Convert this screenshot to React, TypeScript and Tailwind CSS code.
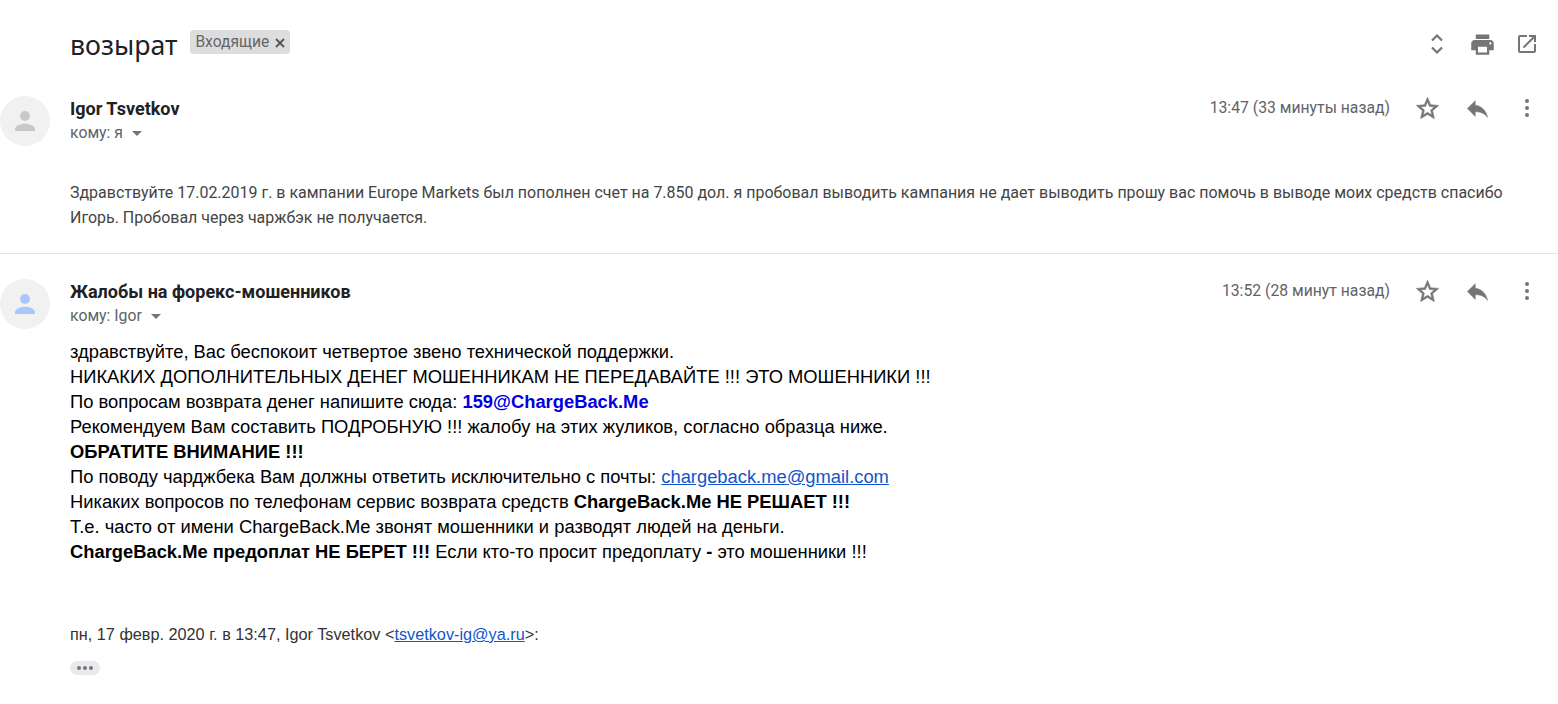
import React from "react";

const Star = () => (
  <svg viewBox="0 0 24 24" className="w-[27px] h-[27px]" fill="#757575" stroke="#757575" strokeWidth="0.5">
    <path d="M22 9.24l-7.19-.62L12 2 9.19 8.63 2 9.24l5.46 4.73L5.82 21 12 17.27 18.18 21l-1.63-7.03L22 9.24zM12 15.4l-3.76 2.27 1-4.28-3.32-2.88 4.38-.38L12 6.1l1.71 4.04 4.38.38-3.32 2.88 1 4.28L12 15.4z" />
  </svg>
);
const Reply = () => (
  <svg viewBox="0 0 24 24" className="w-[27px] h-[27px]" fill="#757575" stroke="#757575" strokeWidth="0.4">
    <path d="M10 9V5l-7 7 7 7v-4.1c5 0 8.5 1.6 11 5.1-1-5-4-10-11-11z" />
  </svg>
);
const Dots = () => (
  <svg viewBox="0 0 24 24" className="w-[24px] h-[24px]" fill="#757575">
    <circle cx="12" cy="5" r="2" />
    <circle cx="12" cy="12" r="2" />
    <circle cx="12" cy="19" r="2" />
  </svg>
);
const Person = ({ color }: { color: string }) => (
  <svg viewBox="0 0 24 24" className="w-[30px] h-[30px]" fill={color}>
    <circle cx="12" cy="8" r="4" />
    <path d="M4 20v-1.6C4 15.6 9.3 14.2 12 14.2s8 1.4 8 4.2V20H4z" />
  </svg>
);

function MessageHead({
  name,
  to,
  time,
  personColor,
}: {
  name: string;
  to: string;
  time: string;
  personColor: string;
}) {
  return (
    <div className="flex items-start">
      <div className="w-[50px] h-[50px] rounded-full bg-[#f1f1f1] flex items-center justify-center shrink-0">
        <Person color={personColor} />
      </div>
      <div className="ml-5 flex-1 pt-[1px]">
        <div className="font-['Roboto',sans-serif] font-bold text-[18px] leading-[24px] text-[#202124]">{name}</div>
        <div className="flex items-center font-['Roboto',sans-serif] text-[15.8px] leading-[20px] text-[#5f6368] mt-[2px]">
          {to}
          <span className="ml-[9px] w-0 h-0 border-x-[5px] border-x-transparent border-t-[5px] border-t-[#757575]" />
        </div>
      </div>
      <div className="flex items-center h-[24px] shrink-0">
        <span className="font-['Roboto',sans-serif] text-[15.75px] text-[#5f6368] mr-[24px]">{time}</span>
        <Star />
        <span className="ml-[23px]"><Reply /></span>
        <span className="ml-[24px]"><Dots /></span>
      </div>
    </div>
  );
}

export default function App() {
  return (
    <div className="w-[1558px] h-[704px] bg-white overflow-hidden font-['Liberation_Sans',sans-serif] text-[#222]">
      <div className="flex items-center h-[88px] pl-[70px] pr-[19px]">
        <span className="font-['Noto_Sans',sans-serif] text-[26.7px] leading-[32px] text-[#202124] translate-y-[1px]">возырат</span>
        <span className="ml-[13px] flex items-center h-[24px] rounded-[4px] bg-[#dddddd] px-[5px] pt-[1px] font-['Roboto',sans-serif] text-[15.6px] text-[#666] -translate-y-[2px]">
          Входящие
          <svg viewBox="0 0 10 10" className="ml-[6px] w-[10px] h-[10px]" stroke="#555" strokeWidth="1.8"><path d="M1 1l8 8M9 1l-8 8" /></svg>
        </span>
        <div className="ml-auto flex items-center">
          <svg viewBox="0 0 24 24" className="w-[24px] h-[24px]" fill="none" stroke="#757575" strokeWidth="2.2"><path d="M7 8.5l5-5 5 5M7 15.5l5 5 5-5" /></svg>
          <svg viewBox="0 0 24 24" className="ml-[20px] w-[27px] h-[27px]" fill="#757575"><path d="M19 8H5c-1.66 0-3 1.34-3 3v6h4v4h12v-4h4v-6c0-1.66-1.34-3-3-3zm-3 11H8v-5h8v5zm3-7c-.55 0-1-.45-1-1s.45-1 1-1 1 .45 1 1-.45 1-1 1zm-1-9H6v4h12V3z" /></svg>
          <svg viewBox="0 0 24 24" className="ml-[19px] w-[24px] h-[24px]" fill="#757575"><path d="M19 19H5V5h7V3H5c-1.11 0-2 .9-2 2v14c0 1.1.89 2 2 2h14c1.1 0 2-.9 2-2v-7h-2v7zM14 3v2h3.59l-9.83 9.83 1.41 1.41L19 6.41V10h2V3h-7z" /></svg>
        </div>
      </div>

      <div className="pr-[19px] h-[166px] border-b border-[#e5e5e5] pt-[8px]">
        <MessageHead name="Igor Tsvetkov" to="кому: я" time="13:47 (33 минуты назад)" personColor="#c8c8c8" />
        <p className="ml-[70px] mt-[34px] font-['Roboto',sans-serif] text-[15.97px] leading-[25px] text-[#444]">
          Здравствуйте 17.02.2019 г. в кампании Europe Markets был пополнен счет на 7.850 дол. я пробовал выводить кампания не дает выводить прошу вас помочь в выводе моих средств спасибо
          <br />
          Игорь. Пробовал через чаржбэк не получается.
        </p>
      </div>

      <div className="pr-[19px] pt-[25px]">
        <MessageHead name="Жалобы на форекс-мошенников" to="кому: Igor" time="13:52 (28 минут назад)" personColor="#a8c7fa" />
        <div className="ml-[70px] mt-[10px] text-[18.35px] leading-[25px] text-black">
          <div>здравствуйте, Вас беспокоит четвертое звено технической поддержки.</div>
          <div>НИКАКИХ ДОПОЛНИТЕЛЬНЫХ ДЕНЕГ МОШЕННИКАМ НЕ ПЕРЕДАВАЙТЕ !!! ЭТО МОШЕННИКИ !!!</div>
          <div>По вопросам возврата денег напишите сюда: <b className="text-[#0000e0]">159@ChargeBack.Me</b></div>
          <div>Рекомендуем Вам составить ПОДРОБНУЮ !!! жалобу на этих жуликов, согласно образца ниже.</div>
          <div><b>ОБРАТИТЕ ВНИМАНИЕ !!!</b></div>
          <div>По поводу чарджбека Вам должны ответить исключительно с почты: <span className="text-[#1155cc] underline">chargeback.me@gmail.com</span></div>
          <div>Никаких вопросов по телефонам сервис возврата средств <b>ChargeBack.Me НЕ РЕШАЕТ !!!</b></div>
          <div>Т.е. часто от имени ChargeBack.Me звонят мошенники и разводят людей на деньги.</div>
          <div><b>ChargeBack.Me предоплат НЕ БЕРЕТ !!!</b> Если кто-то просит предоплату <b>-</b> это мошенники !!!</div>
        </div>
        <div className="ml-[70px] mt-[60px] text-[16.25px] leading-[20px] text-[#333]">
          пн, 17 февр. 2020 г. в 13:47, Igor Tsvetkov &lt;<span className="text-[#1155cc] underline">tsvetkov-ig@ya.ru</span>&gt;:
        </div>
        <div className="ml-[70px] mt-[17px] w-[30px] h-[14px] rounded-full bg-[#e8eaed] flex items-center justify-center gap-[2px]">
          <span className="w-[4px] h-[4px] rounded-full bg-[#777]" />
          <span className="w-[4px] h-[4px] rounded-full bg-[#777]" />
          <span className="w-[4px] h-[4px] rounded-full bg-[#777]" />
        </div>
      </div>
    </div>
  );
}
